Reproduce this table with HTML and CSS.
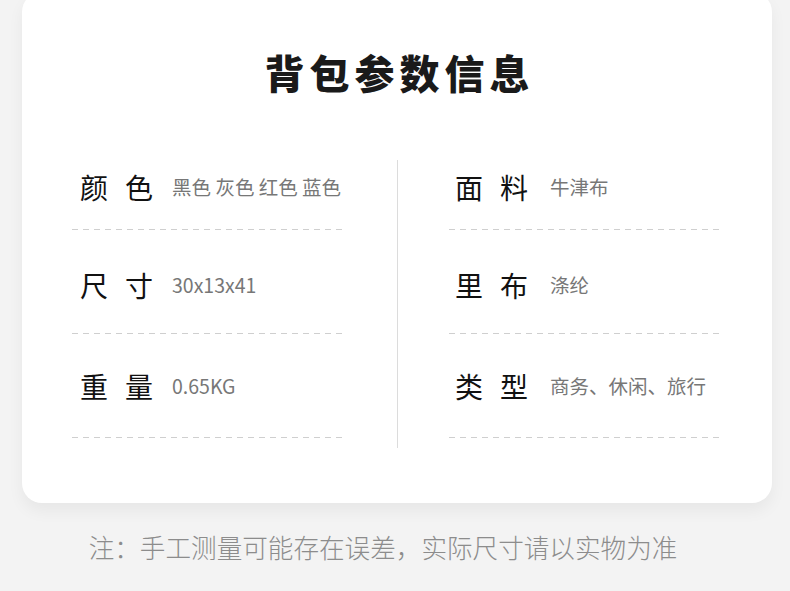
FILE: index.html
```html
<!DOCTYPE html>
<html lang="zh-CN">

<head>
    <meta charset="UTF-8">
    <meta name="viewport" content="width=device-width, initial-scale=1.0">
    <title>背包参数信息</title>
    <link rel="stylesheet" href="styles.css">
</head>

<body>

    <div class="card">
        <h2 class="title">背包参数信息</h2>

        <div class="params">
            <div class="col">
                <div class="row">
                    <span class="label">颜色</span>
                    <span class="value">黑色 灰色 红色 蓝色</span>
                </div>
                <div class="row">
                    <span class="label">尺寸</span>
                    <span class="value">30x13x41</span>
                </div>
                <div class="row">
                    <span class="label">重量</span>
                    <span class="value">0.65KG</span>
                </div>
            </div>

            <div class="col col-right">
                <div class="row">
                    <span class="label">面料</span>
                    <span class="value">牛津布</span>
                </div>
                <div class="row">
                    <span class="label">里布</span>
                    <span class="value">涤纶</span>
                </div>
                <div class="row">
                    <span class="label">类型</span>
                    <span class="value">商务、休闲、旅行</span>
                </div>
            </div>
        </div>
    </div>

    <p class="note">注：手工测量可能存在误差，实际尺寸请以实物为准</p>

</body>

</html>
```

FILE: styles.css
```css
body {
    font-family: "Noto Sans CJK SC", "Noto Sans", sans-serif;
    margin: 0;
    padding: 0;
    background-color: #f3f3f3;
    overflow: hidden;
}

.card {
    margin: -8px 18px 0 22px;
    padding: 52px 0 55px;
    background-color: #fff;
    border-radius: 20px;
    box-shadow: 0 8px 16px rgba(0, 0, 0, 0.05);
}

.title {
    margin: 0 0 60px;
    padding-left: 5px;
    text-align: center;
    font-size: 40px;
    line-height: 56px;
    font-weight: 900;
    letter-spacing: 5px;
    color: #1a1a1a;
}

.params {
    display: flex;
}

.col {
    flex: none;
    width: 50%;
    box-sizing: border-box;
    padding: 0 50px 10px 50px;
}

.col-right {
    border-left: 1px solid #dcdcdc;
    padding-left: 51px;
    padding-right: 53px;
}

.row {
    display: flex;
    align-items: center;
    padding: 40px 0 34px 8px;
    background-image: linear-gradient(to right, #cfcfcf 55%, transparent 55%);
    background-size: 11px 1px;
    background-repeat: repeat-x;
    background-position: left bottom;
}

.row:first-child {
    padding-top: 12px;
    padding-bottom: 28px;
}

.row:last-child {
    padding-top: 37px;
    padding-bottom: 37px;
}

.label {
    flex: none;
    white-space: nowrap;
    font-size: 28px;
    line-height: 30px;
    letter-spacing: 17px;
    color: #111;
    margin-right: 2px;
}

.col-right .label {
    margin-left: -2px;
    margin-right: 5px;
}

.value {
    font-size: 19.5px;
    line-height: 30px;
    color: #777;
    white-space: nowrap;
}

.note {
    margin: 29px 0 0;
    padding-right: 24px;
    text-align: center;
    font-size: 25.6px;
    line-height: 30px;
    font-weight: 300;
    color: #8c8c8c;
}
```
